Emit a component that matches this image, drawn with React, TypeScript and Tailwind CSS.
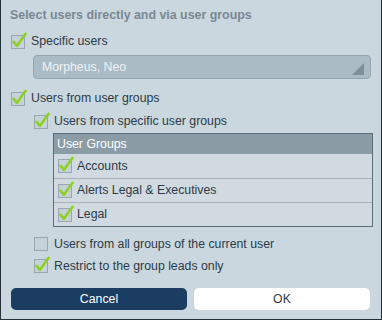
import type { ReactNode } from "react";

function Check({ checked }: { checked: boolean }) {
  return (
    <span className="relative block size-[14px] shrink-0 border border-[#97a6af] bg-[#c6d2d9]">
      {checked && (
        <svg
          className="absolute left-[-1px] top-[-1px] overflow-visible"
          width="14"
          height="14"
          viewBox="0 0 14 14"
        >
          <path
            d="M2.6 6.8 L6 10.8 L14.6 -1.2"
            fill="none"
            stroke="#8dd11f"
            strokeWidth="2.6"
            strokeLinecap="round"
            strokeLinejoin="round"
          />
        </svg>
      )}
    </span>
  );
}

function CheckRow({ checked, children, className = "" }: { checked: boolean; children: ReactNode; className?: string }) {
  return (
    <div className={`flex h-[23px] items-center gap-[6px] ${className}`}>
      <Check checked={checked} />
      <span className="leading-none">{children}</span>
    </div>
  );
}

const groups = ["Accounts", "Alerts Legal & Executives", "Legal"];

export default function App() {
  return (
    <div className="flex h-[320px] w-[382px] flex-col border-x border-b border-[#27313a] bg-[#cad7df] pl-[10px] font-['Liberation_Sans',Arial,sans-serif] text-[12.3px] text-[#2d3b47]">
      <div className="pl-[-1px] pt-[7px] text-[12.4px] font-bold leading-[16px] text-[#7b8891]">
        <span className="-ml-[1px]">Select users directly and via user groups</span>
      </div>

      <CheckRow checked className="mt-[7px]">Specific users</CheckRow>

      <div className="ml-[22px] mt-[2px] flex h-[24px] w-[338px] items-center justify-between rounded-[4px] border border-[#93a4ae] bg-[#aabbc5] pl-[8px] pr-[6px] text-[#eef3f5]">
        <span>Morpheus, Neo</span>
        <svg width="12" height="12" viewBox="0 0 12 12" className="mt-[4px]">
          <polygon points="0,12 12,12 12,0" fill="#7e8f99" />
        </svg>
      </div>

      <CheckRow checked className="mt-[8px]">Users from user groups</CheckRow>
      <CheckRow checked className="ml-[23px]">Users from specific user groups</CheckRow>

      <div className="ml-[42px] w-[320px] border border-[#5b6d79]">
        <div className="flex h-[20px] items-center bg-[#8b9ca7] pl-[3px] text-white">User Groups</div>
        {groups.map((g, i) => (
          <div
            key={g}
            className={`flex h-[24px] items-center gap-[5px] bg-[#d1dae0] pl-[4px] ${i > 0 ? "border-t border-[#a8b5bd]" : ""}`}
          >
            <Check checked />
            <span>{g}</span>
          </div>
        ))}
      </div>

      <CheckRow checked={false} className="ml-[23px] mt-[6px] !h-[22px]">Users from all groups of the current user</CheckRow>
      <CheckRow checked className="ml-[23px] !h-[22px]">Restrict to the group leads only</CheckRow>

      <div className="mt-[11px] flex gap-[7px]">
        <button className="h-[22px] w-[176px] rounded-[5px] bg-[#1b3d61] text-white">Cancel</button>
        <button className="h-[22px] w-[176px] rounded-[5px] bg-white text-[#2d3b47]">OK</button>
      </div>
    </div>
  );
}
